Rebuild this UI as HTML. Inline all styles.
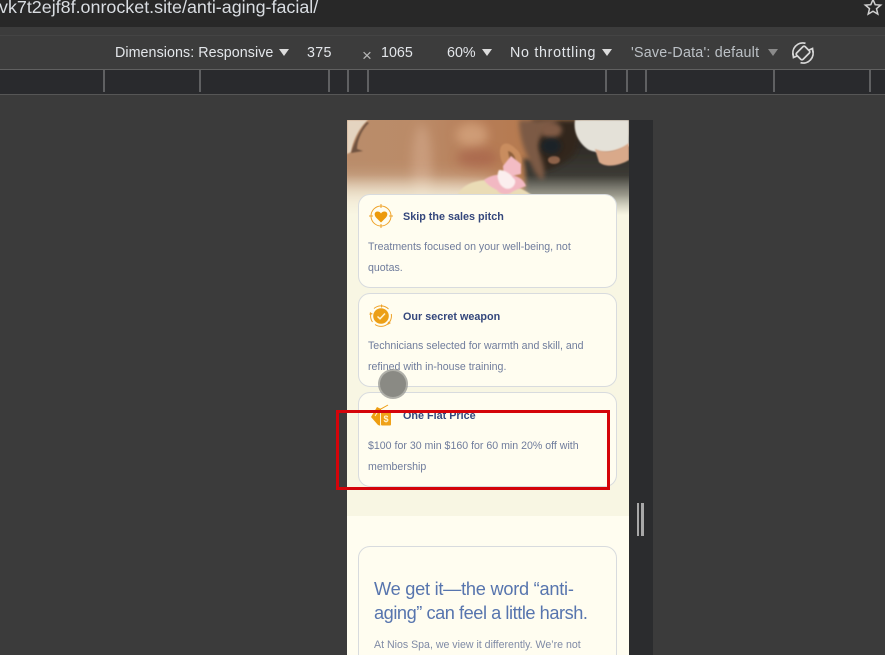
<!DOCTYPE html>
<html>
<head>
<meta charset="utf-8">
<style>
html,body{margin:0;padding:0;background:#3b3b3b}
#r{position:relative;width:885px;height:655px;overflow:hidden;background:#3b3b3b;font-family:"Liberation Sans",sans-serif}
#r div,#r span.a{position:absolute}
.t{white-space:nowrap}
.dt{font-size:14.3px;color:#e3e6ea;top:44px;line-height:18px}
.tick{top:70px;width:2px;height:22px;background:#5f6062}
.tri{width:0;height:0;border-left:5px solid transparent;border-right:5px solid transparent;border-top:7px solid #dcdcdc;top:49px}
.card{left:358px;width:257px;background:#fffdf0;border:1px solid #d8dbde;border-radius:12px;box-sizing:content-box}
.h{left:403px;font-size:10.8px;font-weight:bold;color:#34477c;line-height:14px}
.p{left:368px;font-size:10.6px;color:#6f7c9c;line-height:14px}
</style>
</head>
<body>
<div id="r">
<div style="left:0;top:0;width:885px;height:27px;background:#282828"></div>
<div style="left:0;top:27px;width:885px;height:42px;background:#3c3c3c"></div>
<div style="left:0;top:35px;width:885px;height:1px;background:#444"></div>
<div style="left:0;top:69px;width:885px;height:1px;background:#606060"></div>
<div style="left:0;top:70px;width:885px;height:24px;background:#292a2d"></div>
<div style="left:0;top:94px;width:885px;height:1px;background:#565656"></div>

<div class="t" style="left:-1px;top:-3px;font-size:17.9px;line-height:20px;color:#d9dde2">vk7t2ejf8f.onrocket.site/anti-aging-facial/</div>
<svg style="position:absolute;left:863px;top:-3px" width="20" height="20" viewBox="0 0 20 20"><path d="M10 2.500l2.200 5.200 5.500.4-4.200 3.600 1.300 5.400L10 14.200l-4.800 2.900 1.300-5.400-4.200-3.600 5.500-.4z" fill="none" stroke="#d0d0d0" stroke-width="1.500"/></svg>

<div class="dt t" style="left:115px;letter-spacing:.05px">Dimensions: Responsive</div>
<div class="tri" style="left:279px"></div>
<div class="dt t" style="left:307px;letter-spacing:.3px">375</div>
<div class="t" style="left:362px;top:47px;font-size:17px;line-height:18px;color:#b8b8b8">×</div>
<div class="dt t" style="left:381px">1065</div>
<div class="dt t" style="left:447px">60%</div>
<div class="tri" style="left:482px"></div>
<div class="dt t" style="left:510px;letter-spacing:.7px">No throttling</div>
<div class="tri" style="left:602px"></div>
<div class="dt t" style="left:631px;color:#bcc1c6;letter-spacing:.22px">'Save-Data': default</div>
<div class="tri" style="left:768px;border-top-color:#8a8a8a"></div>
<svg style="position:absolute;left:790px;top:40px" width="26" height="26" viewBox="0 0 26 26" fill="none" stroke="#d8d8d8" stroke-width="1.700"><rect x="8.500" y="7" width="9" height="12" rx="1.500" transform="rotate(45 13 13)"/><path d="M3.500 16.500A10 10 0 0 1 15.500 3.300M22.500 9.500A10 10 0 0 1 10.500 22.700"/><path d="M3 13.500l.5 4 3.500-1.500M23 12.500l-.5-4-3.500 1.500"/></svg>

<div class="tick" style="left:103px"></div><div class="tick" style="left:199px"></div><div class="tick" style="left:328px"></div><div class="tick" style="left:347px"></div><div class="tick" style="left:367px"></div><div class="tick" style="left:605px"></div><div class="tick" style="left:626px"></div><div class="tick" style="left:645px"></div><div class="tick" style="left:773px"></div><div class="tick" style="left:869px"></div>

<!-- device viewport -->
<div style="left:347px;top:120px;width:282px;height:535px;background:#f8f6e3;overflow:hidden">
  <svg style="position:absolute;left:0;top:0" width="282" height="100" viewBox="0 0 282 100">
    <defs>
      <linearGradient id="skin" x1="0" y1="0" x2="1" y2="0"><stop offset="0" stop-color="#b98c6a"/><stop offset=".25" stop-color="#bb8b68"/><stop offset=".5" stop-color="#b67c56"/><stop offset=".7" stop-color="#b67a4c"/><stop offset="1" stop-color="#6a5a4a"/></linearGradient>
      <linearGradient id="fade" x1="0" y1="0" x2="0" y2="1"><stop offset="0" stop-color="#f8f6e3" stop-opacity="0"/><stop offset=".55" stop-color="#f8f6e3" stop-opacity="0"/><stop offset=".75" stop-color="#f8f6e3" stop-opacity=".35"/><stop offset=".95" stop-color="#f8f6e3" stop-opacity="1"/></linearGradient>
      <linearGradient id="dk" x1="0" y1="0" x2="0" y2="1"><stop offset="0" stop-color="#2a2622"/><stop offset=".45" stop-color="#3c3b35"/><stop offset=".9" stop-color="#9a9a8c"/></linearGradient>
      <filter id="b1" filterUnits="userSpaceOnUse" x="-60" y="-60" width="400" height="240"><feGaussianBlur stdDeviation=".8"/></filter>
      <filter id="b2" filterUnits="userSpaceOnUse" x="-60" y="-60" width="400" height="240"><feGaussianBlur stdDeviation="2.500"/></filter>
      <filter id="b5" filterUnits="userSpaceOnUse" x="-60" y="-60" width="400" height="240"><feGaussianBlur stdDeviation="5"/></filter>
      <filter id="b8" filterUnits="userSpaceOnUse" x="-60" y="-60" width="400" height="240"><feGaussianBlur stdDeviation="11"/></filter>
    </defs>
    <rect width="282" height="100" fill="url(#skin)"/>
    <ellipse cx="75" cy="45" rx="10" ry="40" fill="#d5ab8e" opacity=".55" filter="url(#b5)"/>
    <ellipse cx="125" cy="15" rx="16" ry="12" fill="#d7a680" opacity=".75" filter="url(#b5)"/>
    <ellipse cx="130" cy="38" rx="20" ry="9" fill="#a55f49" opacity=".6" filter="url(#b5)"/>
    <rect x="-30" y="64" width="185" height="60" fill="#f4ecd8" opacity=".9" filter="url(#b8)"/>
    <path d="M176 38C196 44 214 30 226 16L290 16V106H162C178 88 182 60 176 38Z" fill="url(#dk)" filter="url(#b2)"/>
    <path d="M185 0H232C234 14 232 28 226 36C214 46 204 50 192 52C186 36 184 16 185 0Z" fill="#30261f" filter="url(#b2)"/>
    <path d="M172 0C172 14 176 28 182 40C186 50 190 58 196 60C200 50 194 40 192 30C190 18 198 8 212 0Z" fill="#7c5a44" filter="url(#b2)"/>
    <ellipse cx="204" cy="10" rx="11" ry="8" fill="#7f5a45" filter="url(#b2)"/>
    <ellipse cx="207" cy="40" rx="6" ry="4" fill="#8d6248" filter="url(#b1)"/>
    <ellipse cx="204" cy="26" rx="10" ry="8" fill="#14202a" opacity=".8" filter="url(#b2)"/>
    <path d="M157 24C152 26 152 34 155 42C158 48 164 52 170 50C176 46 176 36 170 30C166 26 161 22 157 24Z" fill="#c98d5f" filter="url(#b1)"/>
    <path d="M161 31C166 32 170 38 168 45L163 42Z" fill="#8d5f3a" filter="url(#b1)"/>
    <path d="M228 0H282V26C270 32 254 35 242 30C232 24 226 12 228 0Z" fill="#e4e1d8" filter="url(#b1)"/>
    <path d="M248 29C260 34 272 30 282 23V40C272 46 258 48 252 42Z" fill="#d9a98a" filter="url(#b1)"/>
    <path d="M0 0H21C12 8 6 20 4 32L0 34Z" fill="#e4d4c0" filter="url(#b1)"/>
    <path d="M20 2C14 8 9 18 4 33L16 31 10 29C10 22 14 10 22 3Z" fill="#4a342a" opacity=".65" filter="url(#b1)"/>
    <rect width="282" height="100" fill="url(#fade)"/>
    <path d="M110 76C114 66 126 60 142 60C160 62 176 68 186 76Z" fill="#eadcb6" filter="url(#b1)"/>
    <g filter="url(#b1)">
      <path d="M156 46L164 36 174 44 174 54 160 57C157 54 156 50 156 46Z" fill="#f3bcc4"/>
      <path d="M137 60C146 54 154 54 160 56C168 54 176 58 179 66C172 69 168 70 165 72C160 76 152 74 150 70C146 68 140 65 137 60Z" fill="#f2b8c2"/>
      <path d="M152 50C158 50 164 54 166 58C170 60 168 66 164 68C160 70 156 68 153 64C150 58 150 54 152 50Z" fill="#fbeeee"/>
    </g>
  </svg>
  <div style="left:0;top:396px;width:282px;height:139px;background:#fffdf0"></div>
</div>

<div class="card" style="top:194px;height:92px"></div>
<div class="card" style="top:293px;height:92px"></div>
<div class="card" style="top:392px;height:93px"></div>
<div class="card" style="top:546px;height:130px"></div>

<svg style="position:absolute;left:369px;top:204px" width="24" height="24" viewBox="0 0 24 24" fill="none" stroke="#efa32a" stroke-width="1"><circle cx="12" cy="12" r="10"/><path d="M12 0v4M12 20v4M0 12h4M20 12h4"/><path d="M12 18.500L7 13.500C4.500 10.500 5.800 7.500 8.500 7.500C10 7.500 11.300 8.200 12 9.500C12.700 8.200 14 7.500 15.500 7.500C18.200 7.500 19.500 10.500 17 13.500Z" fill="#ec9a0c" stroke="none"/></svg>
<div class="h t" style="top:210px">Skip the sales pitch</div>
<div class="p t" style="top:240px">Treatments focused on your well-being, not</div>
<div class="p t" style="top:261px">quotas.</div>

<svg style="position:absolute;left:369px;top:304px" width="24" height="24" viewBox="0 0 24 24" fill="none" stroke="#efa32a" stroke-width="1"><path d="M5 4.500A10.500 10.500 0 0 1 19.500 5M22.300 10A10.500 10.500 0 0 1 18 20.500A10.500 10.500 0 0 1 6 20.500M3.500 18A10.500 10.500 0 0 1 1.800 10"/><path d="M12 0l2 2-2 2zM22 19l-3.500 2 .5-3.500zM1 8l3 2-3.500 1z" fill="#efa32a" stroke="none"/><circle cx="12" cy="12" r="7.800" fill="#ec9f16" stroke="none"/><path d="M8.500 12.500l2.500 2.300 5-5.300" stroke="#fff3d2" stroke-width="1.500"/></svg>
<div class="h t" style="top:310px">Our secret weapon</div>
<div class="p t" style="top:339px">Technicians selected for warmth and skill, and</div>
<div class="p t" style="top:360px">refined with in-house training.</div>

<svg style="position:absolute;left:369px;top:404px" width="24" height="24" viewBox="0 0 24 24"><path d="M2 13L8 3l4 2V22l-3-1z" fill="#ee9d10"/><path d="M6 12l3-4.500" stroke="#fff3d2" stroke-width="1"/><rect x="12" y="7" width="10" height="14.500" rx="1" fill="#efa118"/><path d="M11.500 6V22" stroke="#fff3d2" stroke-width="1"/><path d="M10 6l9-5" stroke="#ee9d10" stroke-width="1"/><text x="17" y="18" font-size="9" font-weight="bold" fill="#fff3d2" text-anchor="middle" font-family="Liberation Sans">$</text></svg>
<div class="h t" style="top:409px">One Flat Price</div>
<div class="p t" style="top:439px">$100 for 30 min $160 for 60 min 20% off with</div>
<div class="p t" style="top:460px">membership</div>

<div class="t" style="left:374px;top:577px;font-size:18.2px;line-height:24px;color:#5775ae;letter-spacing:-.25px">We get it—the word “anti-</div>
<div class="t" style="left:374px;top:601px;font-size:18.2px;line-height:24px;color:#5775ae;letter-spacing:-.45px">aging” can feel a little harsh.</div>
<div class="p t" style="left:374px;top:638px;font-size:10.6px;color:#7f8aa5">At Nios Spa, we view it differently. We’re not</div>

<!-- touch cursor -->
<div style="left:380px;top:371px;width:26px;height:26px;border-radius:50%;background:#8a8a84;box-shadow:0 0 0 2px rgba(150,150,145,.75)"></div>

<!-- scrollbar -->
<div style="left:629px;top:120px;width:24px;height:535px;background:#2b2c2e"></div>
<div style="left:637px;top:503px;width:2px;height:33px;background:#a8a8a8"></div>
<div style="left:641px;top:503px;width:3px;height:33px;background:#a8a8a8"></div>

<!-- red annotation -->
<div style="left:336px;top:410px;width:274px;height:80px;box-sizing:border-box;border:3px solid #d4040a"></div>
</div>
</body>
</html>
